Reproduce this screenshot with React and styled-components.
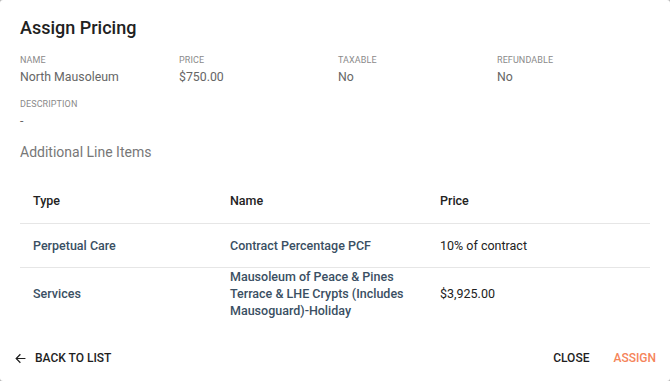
import React from "react";
import styled, { createGlobalStyle } from "styled-components";

const Global = createGlobalStyle`
  html, body { margin: 0; padding: 0; background: #b5b5b5; }
  body { font-family: Roboto, "Liberation Sans", Arial, sans-serif; }
  * { box-sizing: border-box; }
`;

const Dialog = styled.div`
  width: 670px;
  height: 381px;
  background: #fff;
  border-radius: 3px;
  display: flex;
  flex-direction: column;
  overflow: hidden;
`;

const Body = styled.div`
  flex: 1;
  padding: 16px 20px 0 20px;
  display: flex;
  flex-direction: column;
`;

const Title = styled.h2`
  margin: 0;
  font-size: 18px;
  line-height: 24px;
  font-weight: 500;
  color: #212121;
`;

const FieldGrid = styled.div`
  display: grid;
  grid-template-columns: repeat(4, 159px);
  row-gap: 12px;
  margin-top: 14px;
`;

const Field = styled.div`
  display: flex;
  flex-direction: column;
`;

const Label = styled.div`
  font-size: 9px;
  line-height: 12px;
  color: #8a8a8a;
  text-transform: uppercase;
  letter-spacing: 0.1px;
`;

const Value = styled.div`
  font-size: 12.3px;
  line-height: 17px;
  color: #666;
  margin-top: 3px;
`;

const SectionTitle = styled.h3`
  margin: 13px 0 0 0;
  font-size: 14px;
  line-height: 18px;
  font-weight: 400;
  color: #777;
`;

const Table = styled.table`
  width: 630px;
  margin-top: 17px;
  border-collapse: collapse;
  table-layout: fixed;
`;

const Th = styled.th`
  text-align: left;
  font-size: 12.5px;
  font-weight: 500;
  color: #222;
  height: 45px;
  padding: 0 13px;
  border-bottom: 1px solid #e6e6e6;
  width: ${(p) => p.$w || "auto"};
`;

const Row = styled.tr`
  border-bottom: ${(p) => (p.$last ? "none" : "1px solid #e6e6e6")};
`;

const Td = styled.td`
  font-size: 12.5px;
  line-height: 17px;
  font-weight: ${(p) => (p.$plain ? 400 : 500)};
  color: ${(p) => (p.$plain ? "#222" : "#3a4f63")};
  padding: 0 13px;
  height: ${(p) => (p.$tall ? "51px" : "44px")};
  vertical-align: middle;
`;

const Footer = styled.div`
  height: 44px;
  display: flex;
  align-items: center;
  justify-content: space-between;
  padding: 0 14px 2px 14px;
`;

const Actions = styled.div`
  display: flex;
  align-items: center;
  gap: 24px;
`;

const TextButton = styled.button`
  border: none;
  background: none;
  padding: 0;
  font-family: inherit;
  font-size: 12px;
  font-weight: 500;
  line-height: 16px;
  text-transform: uppercase;
  color: ${(p) => (p.$accent ? "#f5845a" : "#1e1e1e")};
  display: flex;
  align-items: center;
  gap: 8px;
  cursor: pointer;
`;

const Arrow = () => (
  <svg width="13" height="13" viewBox="0 0 24 24" fill="none">
    <path d="M20 12H4.5M11 5l-7 7 7 7" stroke="#1e1e1e" strokeWidth="2.2" strokeLinecap="square" />
  </svg>
);

const fields = [
  ["Name", "North Mausoleum"],
  ["Price", "$750.00"],
  ["Taxable", "No"],
  ["Refundable", "No"],
  ["Description", "-"],
];

const rows = [
  { type: "Perpetual Care", name: "Contract Percentage PCF", price: "10% of contract" },
  {
    type: "Services",
    name: "Mausoleum of Peace & Pines Terrace & LHE Crypts (Includes Mausoguard)-Holiday",
    price: "$3,925.00",
    tall: true,
  },
];

export default function App() {
  return (
    <>
      <Global />
      <Dialog>
        <Body>
          <Title>Assign Pricing</Title>
          <FieldGrid>
            {fields.map(([l, v]) => (
              <Field key={l}>
                <Label>{l}</Label>
                <Value>{v}</Value>
              </Field>
            ))}
          </FieldGrid>
          <SectionTitle>Additional Line Items</SectionTitle>
          <Table>
            <thead>
              <tr>
                <Th $w="197px">Type</Th>
                <Th $w="210px">Name</Th>
                <Th>Price</Th>
              </tr>
            </thead>
            <tbody>
              {rows.map((r, i) => (
                <Row key={r.type} $last={i === rows.length - 1}>
                  <Td $tall={r.tall}>{r.type}</Td>
                  <Td $tall={r.tall}>{r.name}</Td>
                  <Td $tall={r.tall} $plain>{r.price}</Td>
                </Row>
              ))}
            </tbody>
          </Table>
        </Body>
        <Footer>
          <TextButton>
            <Arrow />
            Back to list
          </TextButton>
          <Actions>
            <TextButton>Close</TextButton>
            <TextButton $accent>Assign</TextButton>
          </Actions>
        </Footer>
      </Dialog>
    </>
  );
}
